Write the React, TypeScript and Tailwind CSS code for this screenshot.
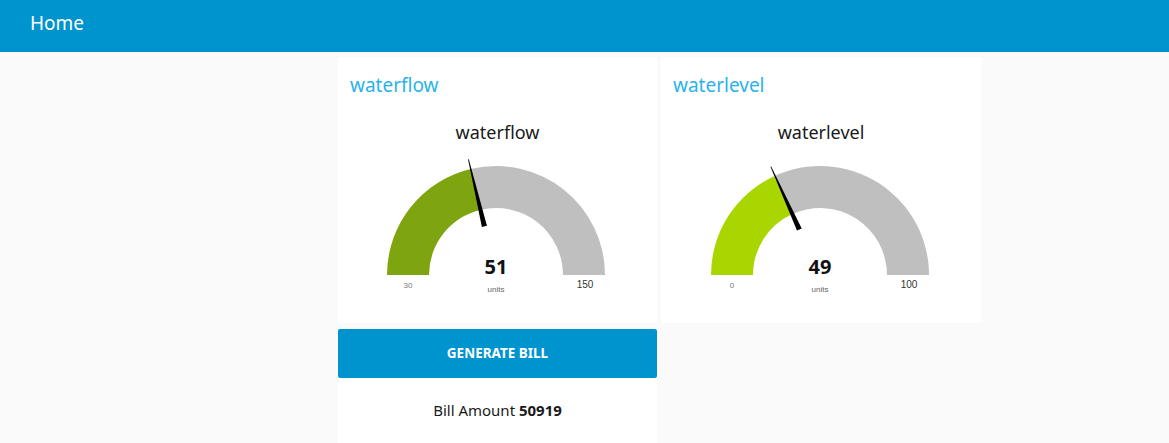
import React from "react";

const font = { fontFamily: '"Noto Sans", "Open Sans", sans-serif' };

function pt(cx: number, cy: number, r: number, deg: number) {
  const a = (deg * Math.PI) / 180;
  return [cx + r * Math.cos(a), cy - r * Math.sin(a)];
}

function sector(cx: number, cy: number, R: number, r: number, a1: number, a2: number) {
  const [x1, y1] = pt(cx, cy, R, a1);
  const [x2, y2] = pt(cx, cy, R, a2);
  const [x3, y3] = pt(cx, cy, r, a2);
  const [x4, y4] = pt(cx, cy, r, a1);
  return `M${x1} ${y1} A${R} ${R} 0 0 1 ${x2} ${y2} L${x3} ${y3} A${r} ${r} 0 0 0 ${x4} ${y4} Z`;
}

function needle(cx: number, cy: number, deg: number) {
  const a = (deg * Math.PI) / 180;
  const px = -Math.sin(a);
  const py = -Math.cos(a);
  const [bx, by] = pt(cx, cy, 50, deg);
  const [tx, ty] = pt(cx, cy, 119, deg);
  const bw = 2.6;
  const tw = 0.4;
  return `${bx + px * bw},${by + py * bw} ${tx + px * tw},${ty + py * tw} ${tx - px * tw},${ty - py * tw} ${bx - px * bw},${by - py * bw}`;
}

function Gauge({
  cx,
  green,
  fillAngle,
  needleAngle,
  value,
  min,
  max,
}: {
  cx: number;
  green: string;
  fillAngle: number;
  needleAngle: number;
  value: string;
  min: string;
  max: string;
}) {
  const cy = 131;
  return (
    <svg width="100%" height="160" className="block">
      <path d={sector(cx, cy, 109, 67, 180, fillAngle)} fill={green} />
      <path d={sector(cx, cy, 109, 67, fillAngle, 0)} fill="#bfbfbf" />
      <polygon points={needle(cx, cy, needleAngle)} fill="#000" />
      <text
        x={cx}
        y={130}
        textAnchor="middle"
        fontFamily='"Noto Sans", sans-serif'
        fontWeight="700"
        fontSize="20"
        fill="#111"
      >
        {value}
      </text>
      <text
        x={cx}
        y={148}
        textAnchor="middle"
        fontFamily='"Liberation Sans", Arial, sans-serif'
        fontSize="8"
        fill="#666"
      >
        units
      </text>
      <text
        x={cx - 88}
        y={144}
        textAnchor="middle"
        fontFamily='"Liberation Sans", Arial, sans-serif'
        fontSize="8"
        fill="#777"
      >
        {min}
      </text>
      <text
        x={cx + 89}
        y={144}
        textAnchor="middle"
        fontFamily='"Liberation Sans", Arial, sans-serif'
        fontSize="10"
        fill="#333"
      >
        {max}
      </text>
    </svg>
  );
}

function GaugeCard({
  title,
  w,
  cx,
  green,
  fillAngle,
  needleAngle,
  value,
  min,
  max,
}: {
  title: string;
  w: string;
  cx: number;
  green: string;
  fillAngle: number;
  needleAngle: number;
  value: string;
  min: string;
  max: string;
}) {
  return (
    <div className={`${w} h-[266px] bg-white flex flex-col`}>
      <div className="mt-[16px] pl-[12px] text-[19px] leading-[24px] text-[#2ab2ec]">{title}</div>
      <div className="mt-[23px] text-center text-[18px] leading-[24px] text-[#1a1a1a]">{title}</div>
      <Gauge
        cx={cx}
        green={green}
        fillAngle={fillAngle}
        needleAngle={needleAngle}
        value={value}
        min={min}
        max={max}
      />
    </div>
  );
}

export default function App() {
  return (
    <div className="w-[1169px] h-[443px] bg-[#fafafa] overflow-hidden" style={font}>
      <div className="h-[52px] bg-[#0094ce] flex items-center pl-[30px]">
        <span className="text-white text-[19px] leading-none -mt-[6px]">Home</span>
      </div>
      <div className="flex gap-[4px] pl-[338px] pt-[5px]">
        <div className="flex flex-col gap-[6px]">
          <GaugeCard
            title="waterflow"
            w="w-[319px]"
            cx={158}
            green="#7ea50f"
            fillAngle={102.9}
            needleAngle={103.4}
            value="51"
            min="30"
            max="150"
          />
          <div className="w-[319px] h-[200px] bg-white flex flex-col">
            <button className="h-[49px] w-full bg-[#0094ce] rounded-[2px] text-white text-[13.5px] font-bold">
              GENERATE BILL
            </button>
            <div className="mt-[21px] text-center text-[15px] leading-[22px] text-[#1a1a1a]">
              Bill Amount <span className="font-bold">50919</span>
            </div>
          </div>
        </div>
        <GaugeCard
          title="waterlevel"
          w="w-[320px]"
          cx={159}
          green="#aad600"
          fillAngle={114.9}
          needleAngle={114.4}
          value="49"
          min="0"
          max="100"
        />
      </div>
    </div>
  );
}
